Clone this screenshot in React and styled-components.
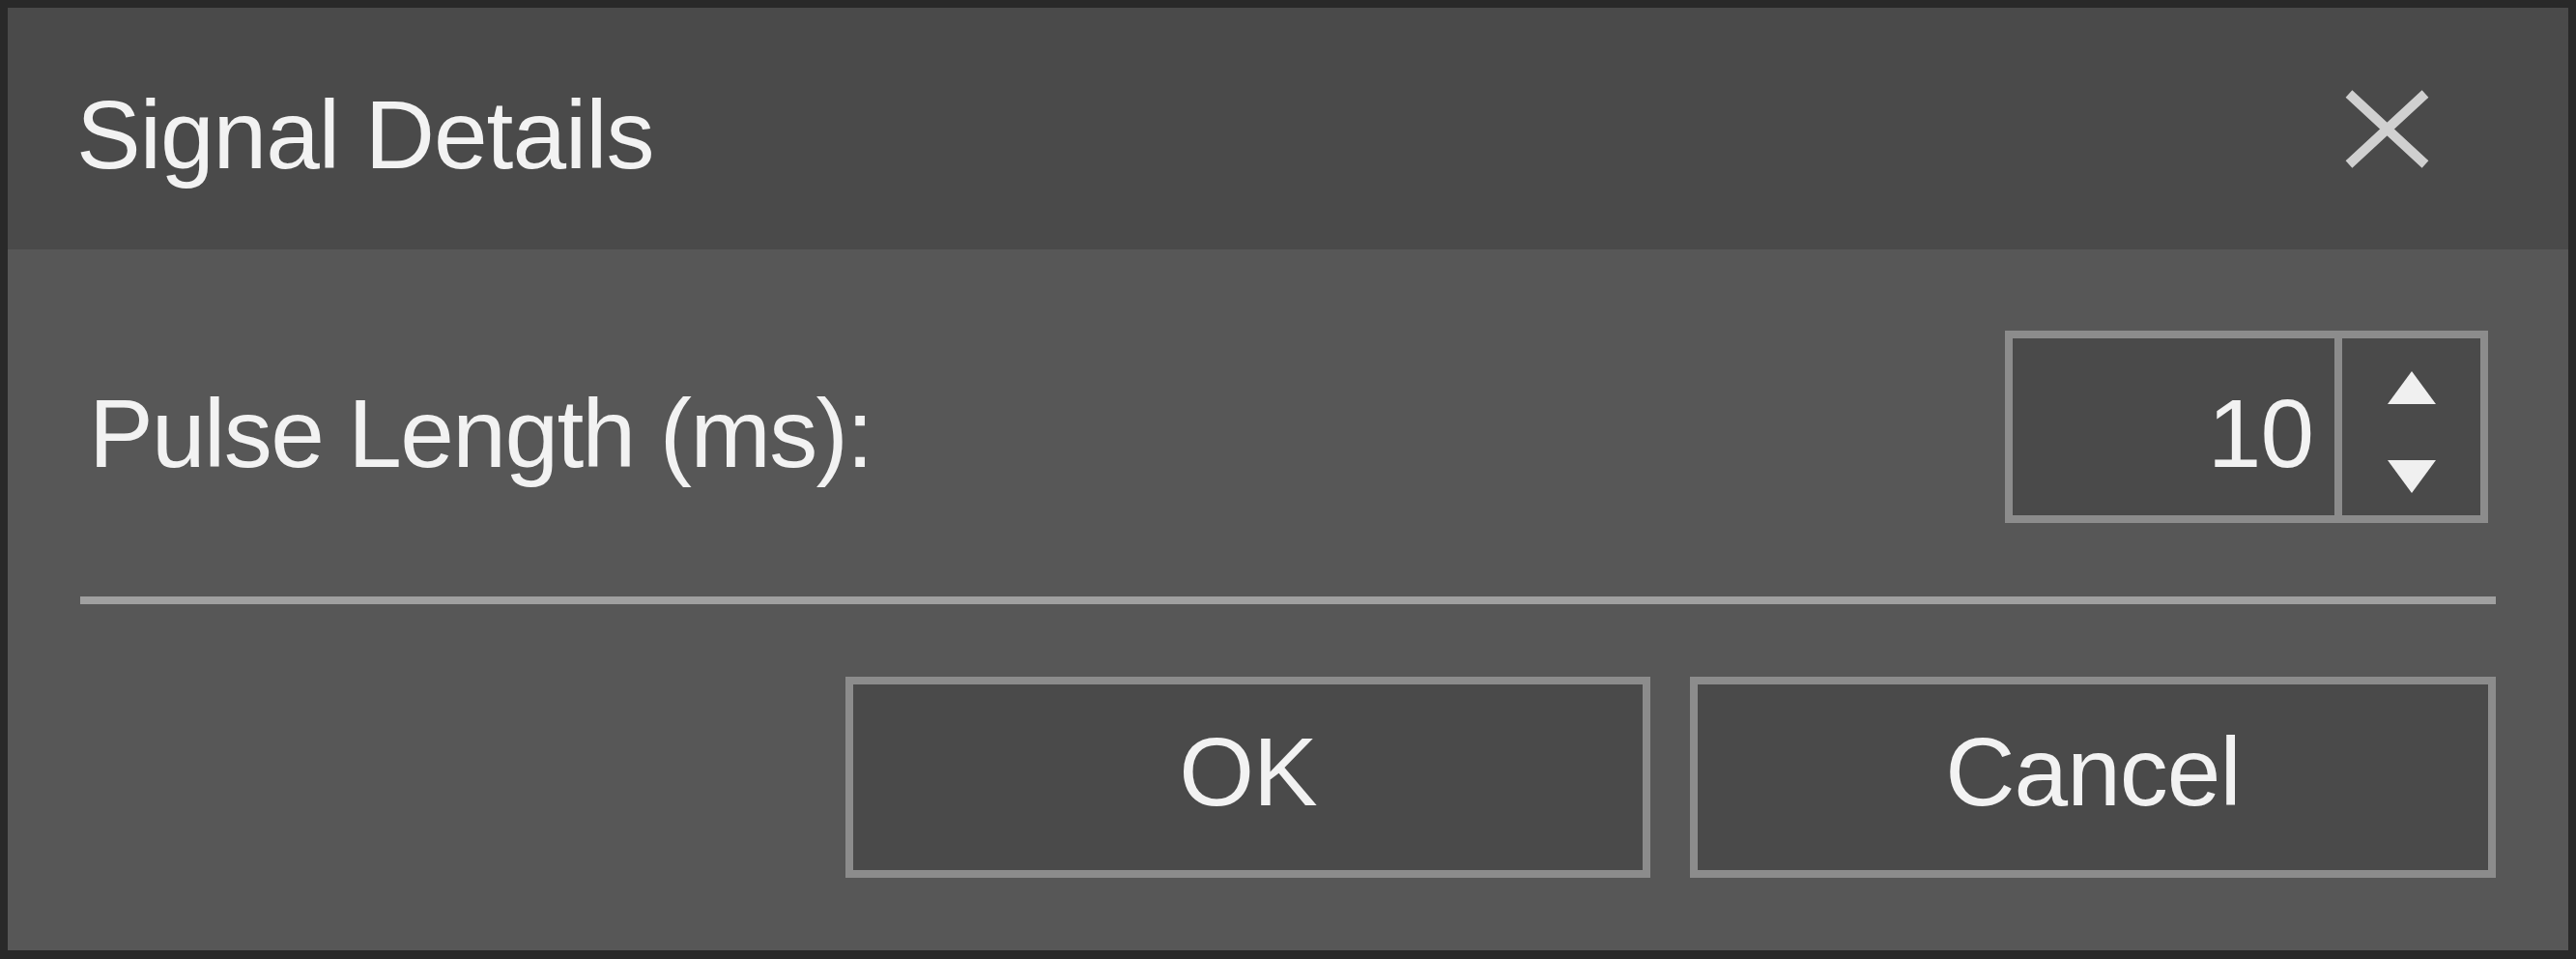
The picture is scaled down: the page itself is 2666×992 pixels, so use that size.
import styled, {createGlobalStyle} from "styled-components";

const GlobalStyle = createGlobalStyle`
  html, body {
    margin: 0;
    padding: 0;
    background-color: #292929;
  }
  * {
    box-sizing: border-box;
  }
`;

const Dialog = styled.div`
  display: flex;
  flex-direction: column;
  width: 2666px;
  height: 992px;
  border-style: solid;
  border-color: #292929;
  border-width: 8px 8px 9px 8px;
  font-family: "Liberation Sans", Arial, sans-serif;
  font-size: 100px;
  line-height: 97px;
  letter-spacing: -1px;
  color: #f2f2f2;
`;

const TitleBar = styled.div`
  display: flex;
  align-items: center;
  height: 250px;
  padding: 0 142px 0 71px;
  background-color: #4a4a4a;
`;

const Title = styled.div`
  margin-top: 13px;
  white-space: nowrap;
`;

const CloseButton = styled.div`
  display: flex;
  margin-left: auto;
  width: 91px;
  height: 83px;
  cursor: pointer;
  svg {
    width: 100%;
    height: 100%;
  }
`;

const Body = styled.div`
  display: flex;
  flex: 1;
  flex-direction: column;
  padding: 84px 75px 75px 75px;
  background-color: #575757;
`;

const FieldRow = styled.div`
  display: flex;
  align-items: center;
  height: 199px;
`;

const FieldLabel = styled.div`
  margin: 14px 0 0 9px;
  letter-spacing: -1.6px;
  white-space: nowrap;
`;

const SpinBox = styled.div`
  display: flex;
  margin: 0 8px 0 auto;
  width: 500px;
  height: 199px;
  border: 8px solid #8c8c8c;
  background-color: #4a4a4a;
`;

const SpinValue = styled.div`
  display: flex;
  flex: 1;
  align-items: center;
  justify-content: flex-end;
  padding: 14px 22px 0 0;
`;

const SpinButtons = styled.div`
  display: flex;
  flex-direction: column;
  align-items: center;
  justify-content: center;
  gap: 58px;
  width: 151px;
  padding-top: 10px;
  border-left: 8px solid #8c8c8c;
`;

const Arrow = styled.svg`
  display: block;
  width: 50px;
  height: 34px;
  fill: #f0f0f0;
`;

const Separator = styled.div`
  height: 8px;
  margin-top: 76px;
  background-color: #a0a0a0;
`;

const ButtonRow = styled.div`
  display: flex;
  justify-content: flex-end;
  gap: 41px;
  margin-top: 75px;
`;

const DialogButton = styled.div`
  display: flex;
  align-items: center;
  justify-content: center;
  width: ${(props) => props.width || 834}px;
  height: 208px;
  padding-bottom: 11px;
  border: 8px solid #8c8c8c;
  background-color: #4a4a4a;
  cursor: pointer;
`;

function App() {
  return (
    <>
      <GlobalStyle />
      <Dialog>
        <TitleBar>
          <Title>Signal Details</Title>
          <CloseButton>
            <svg viewBox="0 0 91 83">
              <path d="M6 5 L85 78 M85 5 L6 78" stroke="#d0d0d0" strokeWidth="10" fill="none" />
            </svg>
          </CloseButton>
        </TitleBar>
        <Body>
          <FieldRow>
            <FieldLabel>Pulse Length (ms):</FieldLabel>
            <SpinBox>
              <SpinValue>10</SpinValue>
              <SpinButtons>
                <Arrow viewBox="0 0 50 34">
                  <polygon points="25,0 50,34 0,34" />
                </Arrow>
                <Arrow viewBox="0 0 50 34">
                  <polygon points="0,0 50,0 25,34" />
                </Arrow>
              </SpinButtons>
            </SpinBox>
          </FieldRow>
          <Separator />
          <ButtonRow>
            <DialogButton width={833}>OK</DialogButton>
            <DialogButton>Cancel</DialogButton>
          </ButtonRow>
        </Body>
      </Dialog>
    </>
  );
}

export default App;
